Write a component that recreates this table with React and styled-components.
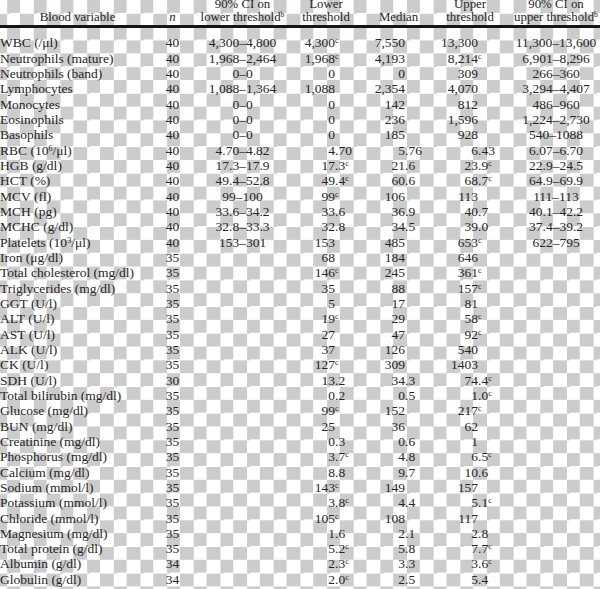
import React from 'react';
import styled, { createGlobalStyle } from 'styled-components';

const Global = createGlobalStyle`
  html, body { margin: 0; padding: 0; overflow: hidden; }
  body {
    width: 600px;
    height: 589px;
    background-color: #ffffff;
    background-image: conic-gradient(#cccccc 0 25%, #ffffff 0 50%, #cccccc 0 75%, #ffffff 0);
    background-size: 26.667px 26.667px;
    background-position: -6.667px 0;
    font-family: "Liberation Serif", "Times New Roman", serif;
    color: #262626;
  }
`;

const COLS = '155px 35px 105px 62px 83px 60px 100px';

const Table = styled.div`
  width: 600px;
  display: flex;
  flex-direction: column;
  margin-top: -1.75px;
`;

const HeadRow = styled.div`
  display: grid;
  grid-template-columns: ${COLS};
  align-items: end;
  font-size: 12.8px;
  line-height: 12.5px;
  padding-bottom: 1.75px;
  border-bottom: 3px solid #151515;
`;

const HeadCell = styled.div`
  text-align: center;
  white-space: nowrap;
  padding-left: ${(p) => p.$shift || 0}px;
  font-style: ${(p) => (p.$italic ? 'italic' : 'normal')};
`;

const Body = styled.div`
  display: flex;
  flex-direction: column;
  padding-top: 7.33px;
`;

const Row = styled.div`
  display: grid;
  grid-template-columns: ${COLS};
  height: 15.34px;
  line-height: 15.34px;
  font-size: 13.5px;
  white-space: nowrap;
`;

const NameCell = styled.div`
  text-align: left;
`;

const CenterCell = styled.div`
  text-align: center;
  padding-left: ${(p) => p.$shift || 0}px;
`;

const DecCell = styled.div`
  text-align: left;
`;

const IntPart = styled.span`
  display: inline-block;
  text-align: right;
  width: ${(p) => p.$point}px;
`;

const Sup = styled.sup`
  font-size: 0.6em;
  line-height: 0;
  vertical-align: 0.5em;
`;

const rows = [
  [<>WBC (/μl)</>, '40', '4,300–4,800', '4,300c', '7,550', '13,300', '11,300–13,600'],
  [<>Neutrophils (mature)</>, '40', '1,968–2,464', '1,968c', '4,193', '8,214c', '6,901–8,296'],
  [<>Neutrophils (band)</>, '40', '0–0', '0', '0', '309', '266–360'],
  [<>Lymphocytes</>, '40', '1,088–1,364', '1,088', '2,354', '4,070', '3,294–4,407'],
  [<>Monocytes</>, '40', '0–0', '0', '142', '812', '486–960'],
  [<>Eosinophils</>, '40', '0–0', '0', '236', '1,596', '1,224–2,730'],
  [<>Basophils</>, '40', '0–0', '0', '185', '928', '540–1088'],
  [<>RBC (10<Sup>6</Sup>/μl)</>, '40', '4.70–4.82', '4.70', '5.76', '6.43', '6.07–6.70'],
  [<>HGB (g/dl)</>, '40', '17.3–17.9', '17.3c', '21.6', '23.9c', '22.9–24.5'],
  [<>HCT (%)</>, '40', '49.4–52.8', '49.4c', '60.6', '68.7c', '64.9–69.9'],
  [<>MCV (fl)</>, '40', '99–100', '99c', '106', '113', '111–113'],
  [<>MCH (pg)</>, '40', '33.6–34.2', '33.6', '36.9', '40.7', '40.1–42.2'],
  [<>MCHC (g/dl)</>, '40', '32.8–33.3', '32.8', '34.5', '39.0', '37.4–39.2'],
  [<>Platelets (10<Sup>3</Sup>/μl)</>, '40', '153–301', '153', '485', '653c', '622–795'],
  [<>Iron (μg/dl)</>, '35', '', '68', '184', '646', ''],
  [<>Total cholesterol (mg/dl)</>, '35', '', '146c', '245', '361c', ''],
  [<>Triglycerides (mg/dl)</>, '35', '', '35', '88', '157c', ''],
  [<>GGT (U/l)</>, '35', '', '5', '17', '81', ''],
  [<>ALT (U/l)</>, '35', '', '19c', '29', '58c', ''],
  [<>AST (U/l)</>, '35', '', '27', '47', '92c', ''],
  [<>ALK (U/l)</>, '35', '', '37', '126', '540', ''],
  [<>CK (U/l)</>, '35', '', '127c', '309', '1403', ''],
  [<>SDH (U/l)</>, '30', '', '13.2', '34.3', '74.4c', ''],
  [<>Total bilirubin (mg/dl)</>, '35', '', '0.2', '0.5', '1.0c', ''],
  [<>Glucose (mg/dl)</>, '35', '', '99c', '152', '217c', ''],
  [<>BUN (mg/dl)</>, '35', '', '25', '36', '62', ''],
  [<>Creatinine (mg/dl)</>, '35', '', '0.3', '0.6', '1', ''],
  [<>Phosphorus (mg/dl)</>, '35', '', '3.7c', '4.8', '6.5c', ''],
  [<>Calcium (mg/dl)</>, '35', '', '8.8', '9.7', '10.6', ''],
  [<>Sodium (mmol/l)</>, '35', '', '143c', '149', '157', ''],
  [<>Potassium (mmol/l)</>, '35', '', '3.8c', '4.4', '5.1c', ''],
  [<>Chloride (mmol/l)</>, '35', '', '105c', '108', '117', ''],
  [<>Magnesium (mg/dl)</>, '35', '', '1.6', '2.1', '2.8', ''],
  [<>Total protein (g/dl)</>, '35', '', '5.2c', '5.8', '7.7c', ''],
  [<>Albumin (g/dl)</>, '34', '', '2.3c', '3.3', '3.6c', ''],
  [<>Globulin (g/dl)</>, '34', '', '2.0c', '2.5', '5.4', ''],
];

function Decimal({ value, point }) {
  let v = value;
  let mark = null;
  if (v.endsWith('c')) {
    v = v.slice(0, -1);
    mark = 'c';
  }
  const dot = v.indexOf('.');
  const int = dot >= 0 ? v.slice(0, dot) : v;
  const frac = dot >= 0 ? v.slice(dot) : '';
  return (
    <DecCell>
      <IntPart $point={point}>{int}</IntPart>
      {frac}
      {mark && <Sup>{mark}</Sup>}
    </DecCell>
  );
}

export default function App() {
  return (
    <>
      <Global />
      <Table>
        <HeadRow>
          <HeadCell>Blood variable</HeadCell>
          <HeadCell $italic>n</HeadCell>
          <HeadCell>
            90% CI on
            <br />
            lower threshold<Sup>b</Sup>
          </HeadCell>
          <HeadCell>
            Lower
            <br />
            threshold
          </HeadCell>
          <HeadCell>Median</HeadCell>
          <HeadCell>
            Upper
            <br />
            threshold
          </HeadCell>
          <HeadCell $shift={12}>
            90% CI on
            <br />
            upper threshold<Sup>b</Sup>
          </HeadCell>
        </HeadRow>
        <Body>
          {rows.map((r, i) => (
            <Row key={i}>
              <NameCell>{r[0]}</NameCell>
              <CenterCell>{r[1]}</CenterCell>
              <CenterCell>{r[2]}</CenterCell>
              <Decimal value={r[3]} point={40} />
              <Decimal value={r[4]} point={48} />
              <Decimal value={r[5]} point={38} />
              <CenterCell $shift={12}>{r[6]}</CenterCell>
            </Row>
          ))}
        </Body>
      </Table>
    </>
  );
}
